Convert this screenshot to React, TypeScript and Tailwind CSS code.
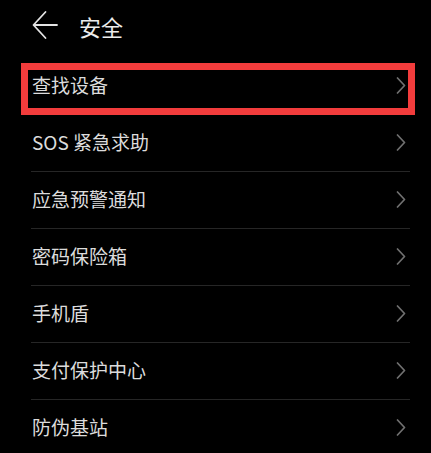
import React from "react";

const items = ["查找设备", "SOS 紧急求助", "应急预警通知", "密码保险箱", "手机盾", "支付保护中心", "防伪基站"];

function Chevron() {
  return (
    <svg width="10" height="17" viewBox="0 0 10 17" fill="none">
      <path d="M1.5 1 L8.5 8.5 L1.5 16" stroke="#707070" strokeWidth="1.7" strokeLinecap="round" strokeLinejoin="round" />
    </svg>
  );
}

export default function App() {
  return (
    <div
      className="w-[431px] h-[453px] bg-black overflow-hidden text-[#dcdcdc]"
      style={{ fontFamily: '"Noto Sans CJK SC", "Noto Sans", sans-serif' }}
    >
      <div className="h-[58px] flex items-center pl-[32px] pb-[4px]">
        <svg width="26" height="30" viewBox="0 0 26 30" fill="none" className="-mt-[4px]">
          <path d="M25 15 H2 M13.5 2 L1.5 15 L13.5 28" stroke="#e4e4e4" strokeWidth="1.8" strokeLinecap="round" strokeLinejoin="round" />
        </svg>
        <span className="ml-[21px] -mt-[2px] text-[22px] leading-none font-normal text-[#ececec]">安全</span>
      </div>
      <div className="flex flex-col">
        {items.map((t, i) => (
          <div key={t} className="relative h-[57px]">
            <div className="h-full ml-[31px] mr-[21px] flex items-center justify-between border-b border-[#262626]">
              <span className="text-[19px] leading-none pl-[1px] -mt-[3px]">{t}</span>
              <span className="mr-[4px] -mt-[1px] flex items-center">
                <Chevron />
              </span>
            </div>
            {i === 0 && (
              <div className="absolute left-[21px] right-[16px] top-[5px] bottom-0 border-[7px] border-[#f23c3c]" />
            )}
          </div>
        ))}
      </div>
    </div>
  );
}
